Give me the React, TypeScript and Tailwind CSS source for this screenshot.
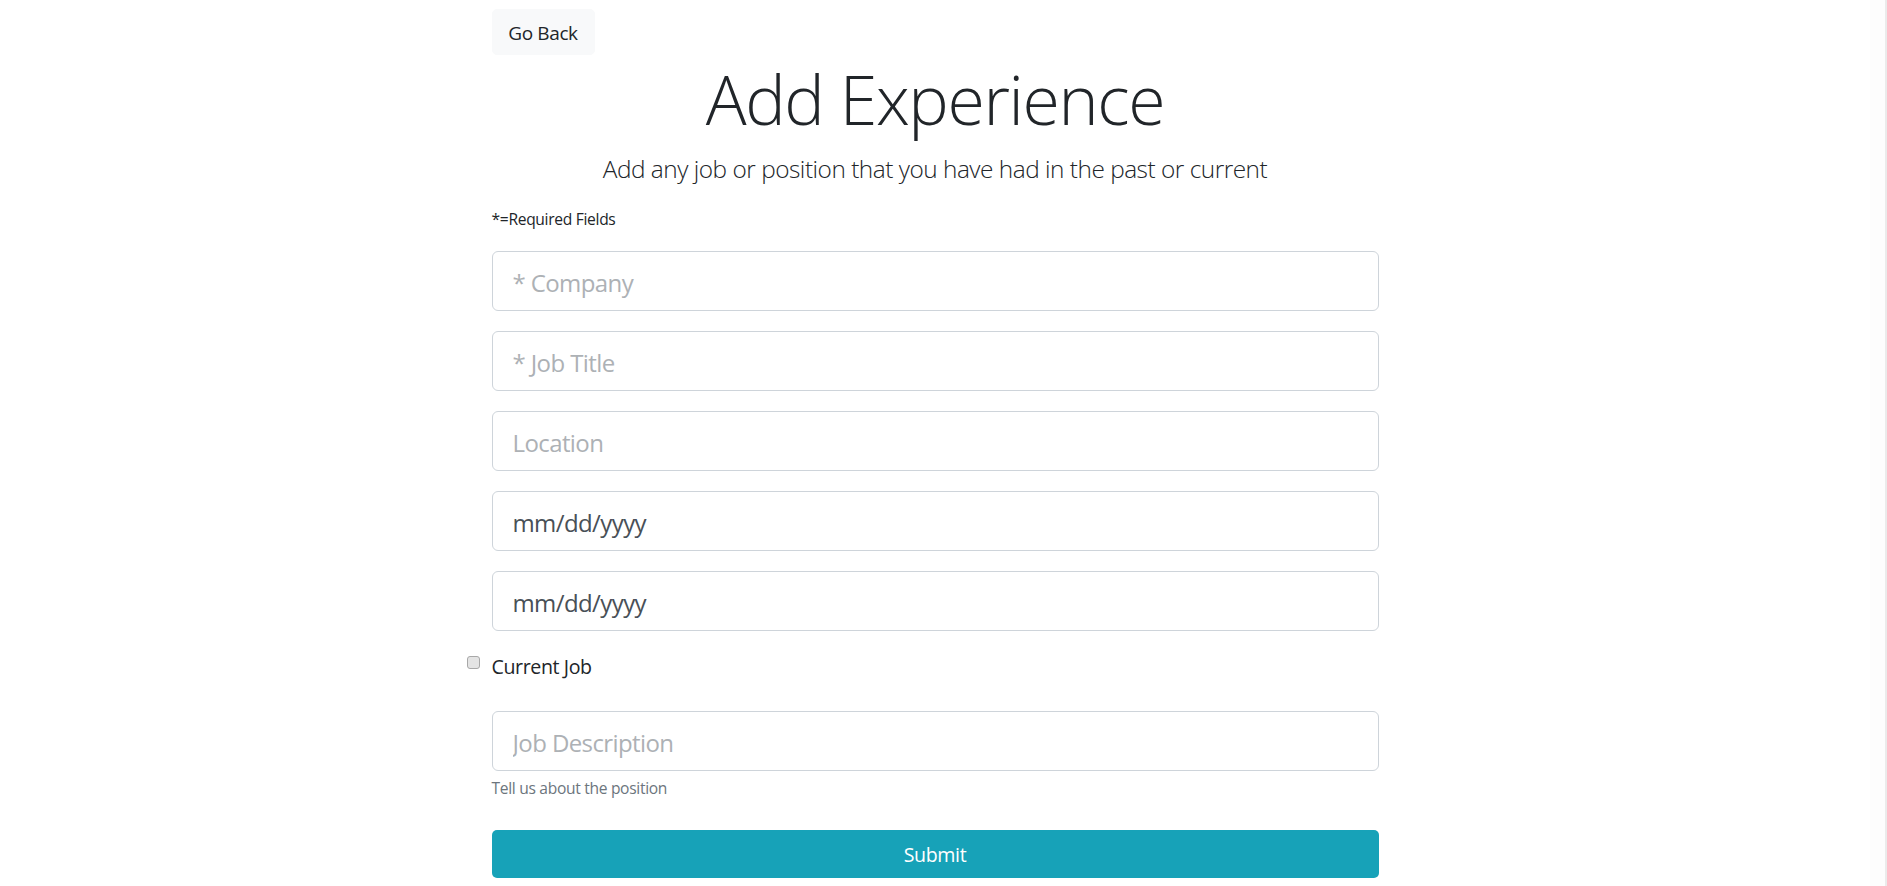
import React from "react";

const font = { fontFamily: '"Open Sans", "Noto Sans", sans-serif' };

function Field({ placeholder, value }: { placeholder?: string; value?: string }) {
  return (
    <div className="mb-[20px]">
      <input
        type="text"
        placeholder={placeholder}
        defaultValue={value}
        className="block w-full h-[60px] px-[20px] pt-[4px] border border-[#ced4da] rounded-[6px] bg-white text-[24px] text-[#495057] placeholder:text-[#adb1b5] outline-none tracking-[-0.025em]"
        style={font}
      />
    </div>
  );
}

export default function App() {
  return (
    <div className="flex w-full min-h-[886px] bg-white" style={font}>
      <div className="flex-1">
        <div className="w-[887px] mx-auto pt-[9px] text-[#212529]">
          <button className="block w-[103px] h-[46px] pt-[2px] rounded-[5px] bg-[#f8f9fa] border border-[#f8f9fa] text-[19px] text-[#212529] tracking-[-0.02em]">
            Go Back
          </button>
          <h1 className="text-center text-[68px] leading-[80px] pt-[4px] font-light mb-[10px] tracking-[-0.02em]">
            Add Experience
          </h1>
          <p className="text-center text-[24.4px] leading-[37.5px] pt-[1px] font-light mb-[19px] tracking-[-0.02em]">
            Add any job or position that you have had in the past or current
          </p>
          <small className="block text-[15.6px] leading-[24px] pb-[20px] tracking-[-0.02em]">
            *=Required Fields
          </small>
          <Field placeholder="* Company" />
          <Field placeholder="* Job Title" />
          <Field placeholder="Location" />
          <Field value="mm/dd/yyyy" />
          <Field value="mm/dd/yyyy" />
          <div className="relative h-[30px] mb-[30px] flex items-center">
            <span className="absolute left-[-25px] top-[5px] w-[13px] h-[13px] rounded-[3px] border border-[#a8a8a8] bg-[#e4e4e4]" />
            <span className="text-[19.6px] leading-[30px] pt-[2px] tracking-[-0.02em]">Current Job</span>
          </div>
          <input
            type="text"
            placeholder="Job Description"
            className="block w-full h-[60px] px-[20px] pt-[4px] border border-[#ced4da] rounded-[6px] bg-white text-[24px] text-[#495057] placeholder:text-[#adb1b5] outline-none tracking-[-0.025em]"
            style={font}
          />
          <small className="block mt-[5px] text-[15.6px] leading-[24px] text-[#6c757d] tracking-[-0.02em]">
            Tell us about the position
          </small>
          <button className="block w-full mt-[30px] h-[48px] pt-[2px] rounded-[5px] bg-[#17a2b8] text-white text-[19.6px] tracking-[-0.02em]">
            Submit
          </button>
        </div>
      </div>
      <div className="w-[17px] shrink-0 bg-[#fdfdfd] border-r-[2px] border-[#ebebeb]" />
    </div>
  );
}
